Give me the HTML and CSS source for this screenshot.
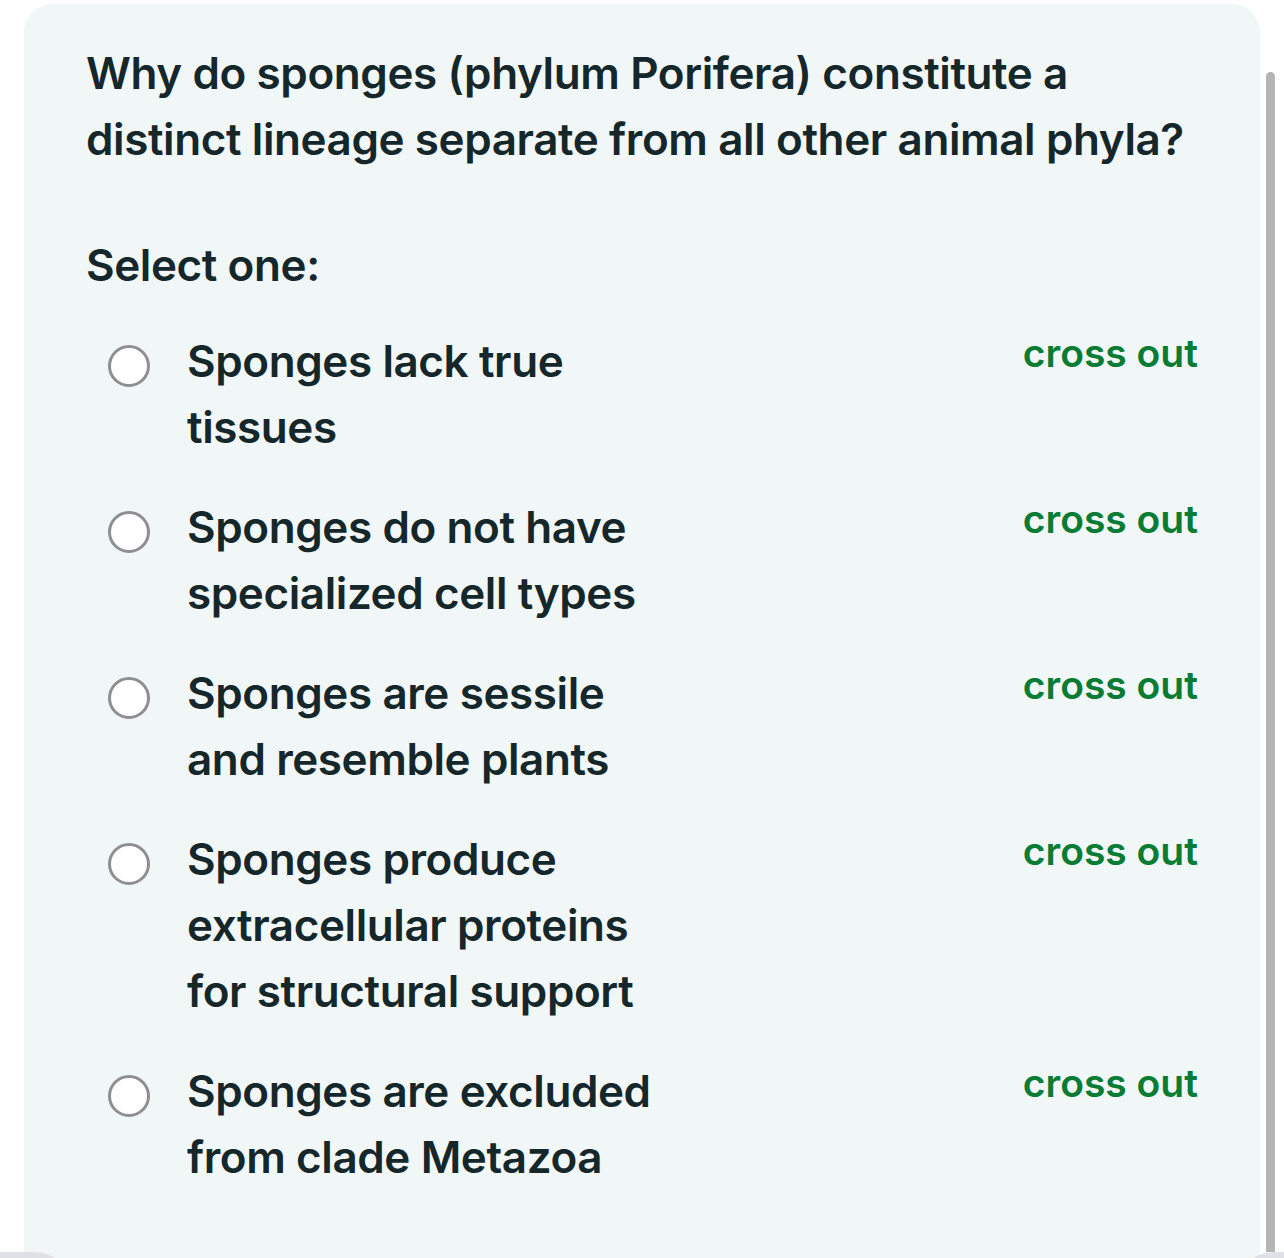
FILE: index.html
```html
<!DOCTYPE html>
<html lang="en">
<head>
    <meta charset="UTF-8">
    <meta name="viewport" content="width=device-width, initial-scale=1.0">
    <title>Question</title>
    <link rel="stylesheet" href="styles.css">
</head>
<body>
    <div class="card">
        <!-- Question -->
        <p class="question">Why do sponges (phylum Porifera) constitute a distinct lineage separate from all other animal phyla?</p>
        <p class="prompt">Select one:</p>

        <!-- Answers -->
        <div class="answers">
            <label class="answer">
                <span class="radio"></span>
                <span class="answer-text">Sponges lack true tissues</span>
                <span class="cross">cross out</span>
            </label>
            <label class="answer">
                <span class="radio"></span>
                <span class="answer-text">Sponges do not have specialized cell types</span>
                <span class="cross">cross out</span>
            </label>
            <label class="answer">
                <span class="radio"></span>
                <span class="answer-text">Sponges are sessile and resemble plants</span>
                <span class="cross">cross out</span>
            </label>
            <label class="answer">
                <span class="radio"></span>
                <span class="answer-text">Sponges produce extracellular proteins for structural support</span>
                <span class="cross">cross out</span>
            </label>
            <label class="answer">
                <span class="radio"></span>
                <span class="answer-text">Sponges are excluded from clade Metazoa</span>
                <span class="cross">cross out</span>
            </label>
        </div>
    </div>

    <!-- overlays -->
    <div class="scrollbar"></div>
    <div class="tab tab-left"></div>
    <div class="tab tab-right"></div>
</body>
</html>
```

FILE: styles.css
```css
html {
    overflow: hidden;
}
body {
    font-family: Inter, "Noto Sans", sans-serif;
    background-color: #fff;
    color: #15272a;
    margin: 0;
    padding: 4px 24px 0;
}
.card {
    background-color: #f1f7f7;
    border-radius: 28px;
    padding: 36px 60px 120px 62px;
}
.question,
.prompt {
    margin: 0;
    font-size: 44px;
    line-height: 66px;
    font-weight: 600;
    letter-spacing: -0.4px;
}
.prompt {
    margin-top: 60px;
}
.answers {
    display: flex;
    flex-direction: column;
    gap: 34px;
    margin-top: 30px;
}
.answer {
    display: flex;
    align-items: flex-start;
    cursor: pointer;
}
.radio {
    flex: none;
    width: 42px;
    height: 42px;
    box-sizing: border-box;
    margin: 17px 37px 0 22px;
    border: 3.5px solid #8e8e93;
    border-radius: 50%;
    background-color: #fff;
}
.answer-text {
    width: 480px;
    font-size: 44px;
    line-height: 66px;
    font-weight: 600;
    letter-spacing: -0.4px;
}
.cross {
    margin: 0 2px 0 auto;
    color: #087b35;
    font-size: 39px;
    line-height: 49px;
    font-weight: 600;
}
.scrollbar {
    position: fixed;
    left: 1266px;
    top: 72px;
    width: 9px;
    height: 1180px;
    border-radius: 5px 5px 0 0;
    background-color: #b5b5b5;
}
.tab {
    position: fixed;
    top: 1252px;
    width: 110px;
    height: 40px;
    background-color: #dfe1e6;
}
.tab-left {
    left: -36px;
    border-top-right-radius: 40px;
}
.tab-right {
    right: -60px;
    border-top-left-radius: 40px;
}
```
